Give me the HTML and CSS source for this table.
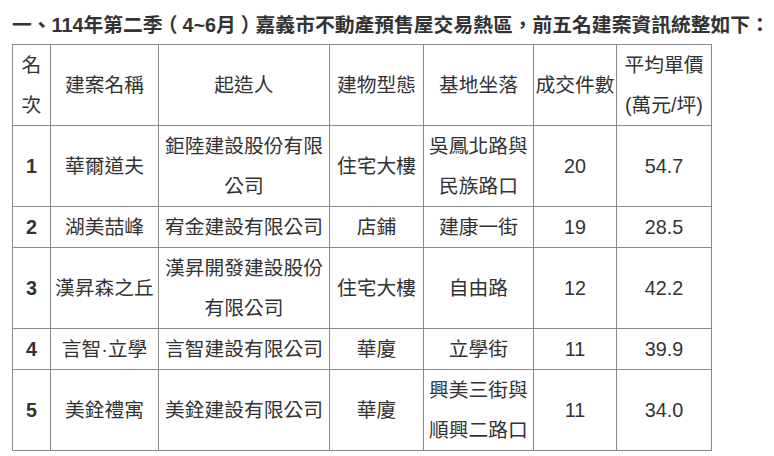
FILE: index.html
```html
<!DOCTYPE html>
<html lang="zh-Hant">
<head>
<meta charset="utf-8">
<title>嘉義市預售屋交易熱區</title>
<link rel="stylesheet" href="styles.css">
</head>
<body>
<div class="page">
  <h1 class="title">一、114年第二<span class="tight">季</span><span class="loose">（</span>4~6<span class="loose">月</span><span class="tight">）</span>嘉義市不動產預售屋交易熱區，前五名建案資訊統整如下：</h1>
  <table class="rank">
    <colgroup>
      <col class="c-rank">
      <col class="c-name">
      <col class="c-dev">
      <col class="c-type">
      <col class="c-loc">
      <col class="c-count">
      <col class="c-price">
    </colgroup>
    <thead>
      <tr>
        <th>名次</th>
        <th>建案名稱</th>
        <th>起造人</th>
        <th>建物型態</th>
        <th>基地坐落</th>
        <th>成交件數</th>
        <th>平均單價(萬元/坪)</th>
      </tr>
    </thead>
    <tbody>
      <tr>
        <td class="num">1</td>
        <td>華爾道夫</td>
        <td>鉅陸建設股份有限公司</td>
        <td>住宅大樓</td>
        <td>吳鳳北路與民族路口</td>
        <td>20</td>
        <td>54.7</td>
      </tr>
      <tr>
        <td class="num">2</td>
        <td>湖美喆峰</td>
        <td>宥金建設有限公司</td>
        <td>店鋪</td>
        <td>建康一街</td>
        <td>19</td>
        <td>28.5</td>
      </tr>
      <tr>
        <td class="num">3</td>
        <td>漢昇森之丘</td>
        <td>漢昇開發建設股份有限公司</td>
        <td>住宅大樓</td>
        <td>自由路</td>
        <td>12</td>
        <td>42.2</td>
      </tr>
      <tr>
        <td class="num">4</td>
        <td>言智·立學</td>
        <td>言智建設有限公司</td>
        <td>華廈</td>
        <td>立學街</td>
        <td>11</td>
        <td>39.9</td>
      </tr>
      <tr class="tall">
        <td class="num">5</td>
        <td>美銓禮寓</td>
        <td>美銓建設有限公司</td>
        <td>華廈</td>
        <td>興美三街與順興二路口</td>
        <td>11</td>
        <td>34.0</td>
      </tr>
    </tbody>
  </table>
</div>
</body>
</html>
```

FILE: styles.css
```css
* {
  box-sizing: border-box;
}

html, body {
  margin: 0;
  padding: 0;
  background: #ffffff;
}

body {
  font-family: "Liberation Sans", "Noto Sans CJK TC", Arial, sans-serif;
  color: #333333;
  font-size: 19.75px;
}

.page {
  padding: 10px 0 0 12px;
}

.title {
  margin: 0 0 4px 0;
  font-size: 19.8px;
  line-height: 30px;
  font-weight: bold;
  white-space: nowrap;
  color: #333333;
}

.tight {
  letter-spacing: -5px;
}

.loose {
  letter-spacing: 5px;
}

.rank {
  table-layout: fixed;
  border-collapse: separate;
  border-spacing: 0;
  width: 699px;
  border-left: 1px solid #8a8a8a;
  border-top: 1px solid #8a8a8a;
}

.c-rank { width: 38px; }
.c-name { width: 108px; }
.c-dev { width: 171px; }
.c-type { width: 94px; }
.c-loc { width: 110px; }
.c-count { width: 83px; }
.c-price { width: 95px; }

.rank th,
.rank td {
  border-right: 1px solid #8a8a8a;
  border-bottom: 1px solid #8a8a8a;
  padding: 0;
  text-align: center;
  vertical-align: middle;
  font-weight: normal;
  line-height: 40px;
  height: 41px;
  color: #333333;
}

.rank td.num {
  font-weight: bold;
}

.rank tr.tall td {
  height: 81px;
}
```
